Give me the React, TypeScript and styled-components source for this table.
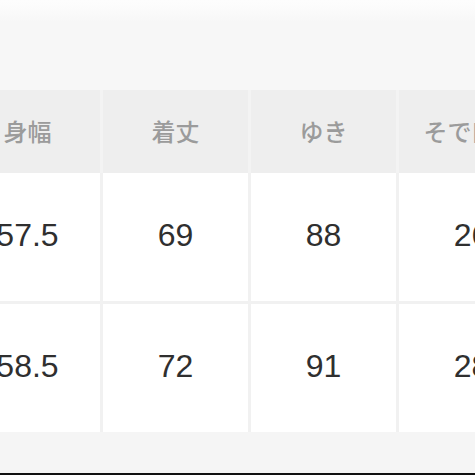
import React from "react";
import styled, { createGlobalStyle } from "styled-components";

const Global = createGlobalStyle`
  html, body { margin: 0; padding: 0; background: #f7f7f7; }
  #root { width: 475px; height: 475px; overflow: hidden; }
`;

const Page = styled.div`
  width: 475px;
  height: 475px;
  overflow: hidden;
  display: flex;
  flex-direction: column;
  background: #f7f7f7;
`;

const TopBand = styled.div`
  height: 90px;
  flex: none;
  background: linear-gradient(#fdfdfd 0px, #fcfcfc 6px, #f7f7f7 22px, #f7f7f7 100%);
`;

const Table = styled.div`
  margin-left: -45px;
  width: 600px;
  display: flex;
  flex-direction: column;
  flex: none;
`;

const HeaderRow = styled.div`
  display: grid;
  grid-template-columns: repeat(4, 145px);
  column-gap: 3px;
  height: 83px;
  background: #f3f3f3;
`;

const HeaderCell = styled.div`
  background: #eeeeee;
  display: flex;
  align-items: center;
  justify-content: center;
  padding-bottom: 2px;
  font-family: "Noto Sans CJK JP", "Noto Sans", sans-serif;
  font-size: 24px;
  font-weight: 500;
  color: #9b9b9b;
  white-space: nowrap;
`;

const Body = styled.div`
  display: grid;
  grid-template-columns: repeat(4, 145px);
  grid-auto-rows: 128px;
  gap: 3px;
  background: #f1f1f1;
`;

const Cell = styled.div`
  background: #ffffff;
  display: flex;
  align-items: center;
  justify-content: center;
  padding-bottom: 4px;
  font-family: "Liberation Sans", Arial, sans-serif;
  font-size: 32px;
  color: #2f2f2f;
`;

const Footer = styled.div`
  flex: 1;
  background: #f5f5f5;
  border-bottom: 2px solid #111;
`;

const headers = ["身幅", "着丈", "ゆき", "そで口幅"];
const rows = [
  ["57.5", "69", "88", "26"],
  ["58.5", "72", "91", "28"],
];

export default function App() {
  return (
    <>
      <Global />
      <Page>
        <TopBand />
        <Table>
          <HeaderRow>
            {headers.map((h) => (
              <HeaderCell key={h}>{h}</HeaderCell>
            ))}
          </HeaderRow>
          <Body>
            {rows.flat().map((v, i) => (
              <Cell key={i}>{v}</Cell>
            ))}
          </Body>
        </Table>
        <Footer />
      </Page>
    </>
  );
}
